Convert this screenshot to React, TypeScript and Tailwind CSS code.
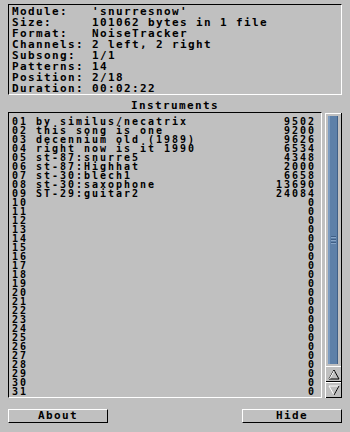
const info: [string, string][] = [
  ["Module:", "'snurresnow'"],
  ["Size:", "101062 bytes in 1 file"],
  ["Format:", "NoiseTracker"],
  ["Channels:", "2 left, 2 right"],
  ["Subsong:", "1/1"],
  ["Patterns:", "14"],
  ["Position:", "2/18"],
  ["Duration:", "00:02:22"],
];

const named: [string, number][] = [
  ["by similus/necatrix", 9502],
  ["this song is one", 9200],
  ["decennium old (1989)", 9626],
  ["right now is it 1990", 6534],
  ["st-87:snurre5", 4348],
  ["st-87:Highhat", 2000],
  ["st-30:blech1", 6658],
  ["st-30:saxophone", 13690],
  ["ST-29:guitar2", 24084],
];

const instruments = Array.from({ length: 31 }, (_, i) => {
  const n = named[i];
  return {
    id: String(i + 1).padStart(2, "0"),
    name: n ? n[0] : "",
    size: n ? n[1] : 0,
  };
});

function Button({ label }: { label: string }) {
  return (
    <button className="w-[100px] h-[14px] border-t border-l border-t-white border-l-white border-b border-r border-b-black border-r-black text-center leading-[12px]">
      {label}
    </button>
  );
}

export default function App() {
  return (
    <div className="w-[350px] h-[432px] bg-[#c0c0c0] text-black font-['DejaVu_Sans_Mono',monospace] font-bold text-[11px] tracking-[1.38px] px-[8px] pt-[4px] flex flex-col overflow-hidden">
      {/* module info */}
      <div className="h-[91px] border-t border-l border-t-black border-l-black border-b border-r border-b-white border-r-white pl-[3px] pt-[1px]">
        {info.map(([k, v]) => (
          <div key={k} className="flex leading-[11px] whitespace-pre">
            <span className="w-[80px] shrink-0">{k}</span>
            <span>{v}</span>
          </div>
        ))}
      </div>

      <div className="h-[17px] pt-[5px] leading-[11px] text-center">Instruments</div>

      <div className="flex gap-[3px] h-[286px]">
        {/* instrument list */}
        <div className="w-[314px] border-t border-l border-t-black border-l-black border-b border-r border-b-white border-r-white pl-[3px] pr-[5px] pt-[4px] text-[10px] tracking-[1.98px]">
          {instruments.map((it) => (
            <div key={it.id} className="flex justify-between leading-[9px] h-[9px] whitespace-pre">
              <span>
                {it.id} {it.name}
              </span>
              <span>{it.size}</span>
            </div>
          ))}
        </div>

        {/* scrollbar */}
        <div className="w-[17px] mt-[1px] flex flex-col border-l border-l-white border-r border-r-black">
          <div className="flex-1 border-t border-t-white pl-[2px] pr-[3px] pt-[2px] pb-[2px] flex">
            <div className="w-[10px] flex-1 bg-[#5d80a8] border-l-2 border-l-[#7c9bc0] border-r border-r-[#3f5f86] flex flex-col items-center justify-center gap-[1px]">
              <div className="w-[5px] h-[2px] border-t border-t-[#3f5f86] border-b border-b-[#86a4c6]" />
              <div className="w-[5px] h-[2px] border-t border-t-[#3f5f86] border-b border-b-[#86a4c6]" />
              <div className="w-[5px] h-[2px] border-t border-t-[#3f5f86] border-b border-b-[#86a4c6]" />
            </div>
          </div>
          <div className="h-[16px] border-t border-t-white border-b border-b-black flex items-center justify-center">
            <svg width="12" height="11" viewBox="0 0 12 11">
              <path d="M6 1 L11 10 L1 10 Z" fill="none" stroke="#000" strokeWidth="1" />
              <path d="M6 2 L1.5 10" fill="none" stroke="#fff" strokeWidth="1" />
            </svg>
          </div>
          <div className="h-[16px] border-t border-t-white border-b border-b-black flex items-center justify-center">
            <svg width="12" height="11" viewBox="0 0 12 11">
              <path d="M1 1 L11 1 L6 10 Z" fill="none" stroke="#fff" strokeWidth="1" />
              <path d="M11 1 L6 10" fill="none" stroke="#000" strokeWidth="1" />
            </svg>
          </div>
        </div>
      </div>

      <div className="flex justify-between mt-[11px]">
        <Button label="About" />
        <Button label="Hide" />
      </div>
    </div>
  );
}
